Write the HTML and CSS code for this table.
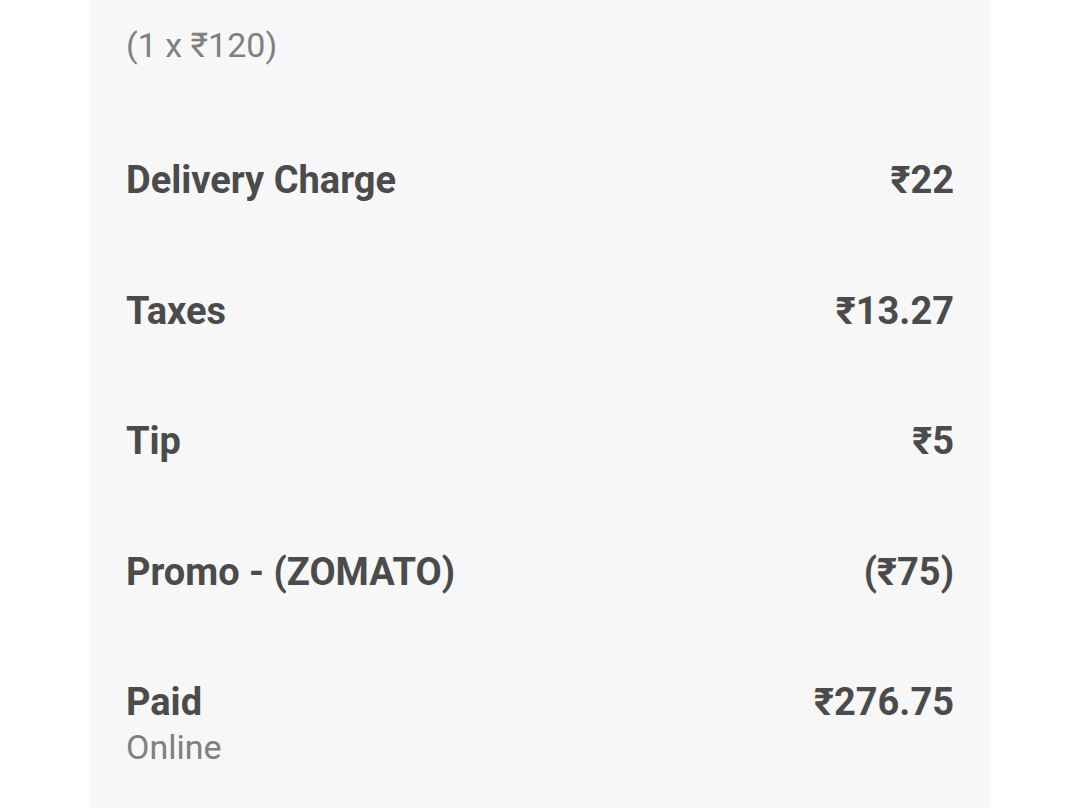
FILE: index.html
```html
<!DOCTYPE html>
<html>
<head>
<meta charset="utf-8">
<link rel="stylesheet" href="styles.css">
</head>
<body>
<div class="panel">
  <div class="qty">(1 x ₹120)</div>
  <div class="rows">
    <div class="row"><span>Delivery Charge</span><span>₹22</span></div>
    <div class="row"><span>Taxes</span><span>₹13.27</span></div>
    <div class="row"><span>Tip</span><span>₹5</span></div>
    <div class="row"><span>Promo - (ZOMATO)</span><span>(₹75)</span></div>
    <div class="row paid">
      <div class="paid-label">
        <span>Paid</span>
        <span class="sub">Online</span>
      </div>
      <span>₹276.75</span>
    </div>
  </div>
</div>
</body>
</html>
```

FILE: styles.css
```css
html, body {
  margin: 0;
  padding: 0;
  background: #ffffff;
}
body {
  font-family: Roboto, "Noto Sans", "DejaVu Sans", sans-serif;
  width: 1080px;
  height: 808px;
  overflow: hidden;
}
.panel {
  margin-left: 90px;
  width: 900px;
  height: 808px;
  box-sizing: border-box;
  background: #f7f7f7;
  padding: 27px 36px 0 36px;
}
.qty {
  font-size: 34px;
  line-height: 36px;
  color: #808080;
}
.rows {
  display: flex;
  flex-direction: column;
  gap: 86.5px;
  margin-top: 95px;
}
.row {
  display: flex;
  justify-content: space-between;
  align-items: flex-start;
  font-size: 38px;
  font-weight: 700;
  line-height: 44px;
  color: #4b4b4b;
}
.paid-label {
  display: flex;
  flex-direction: column;
}
.sub {
  font-size: 34px;
  font-weight: 400;
  line-height: 36px;
  margin-top: 5px;
  color: #808080;
}
```
